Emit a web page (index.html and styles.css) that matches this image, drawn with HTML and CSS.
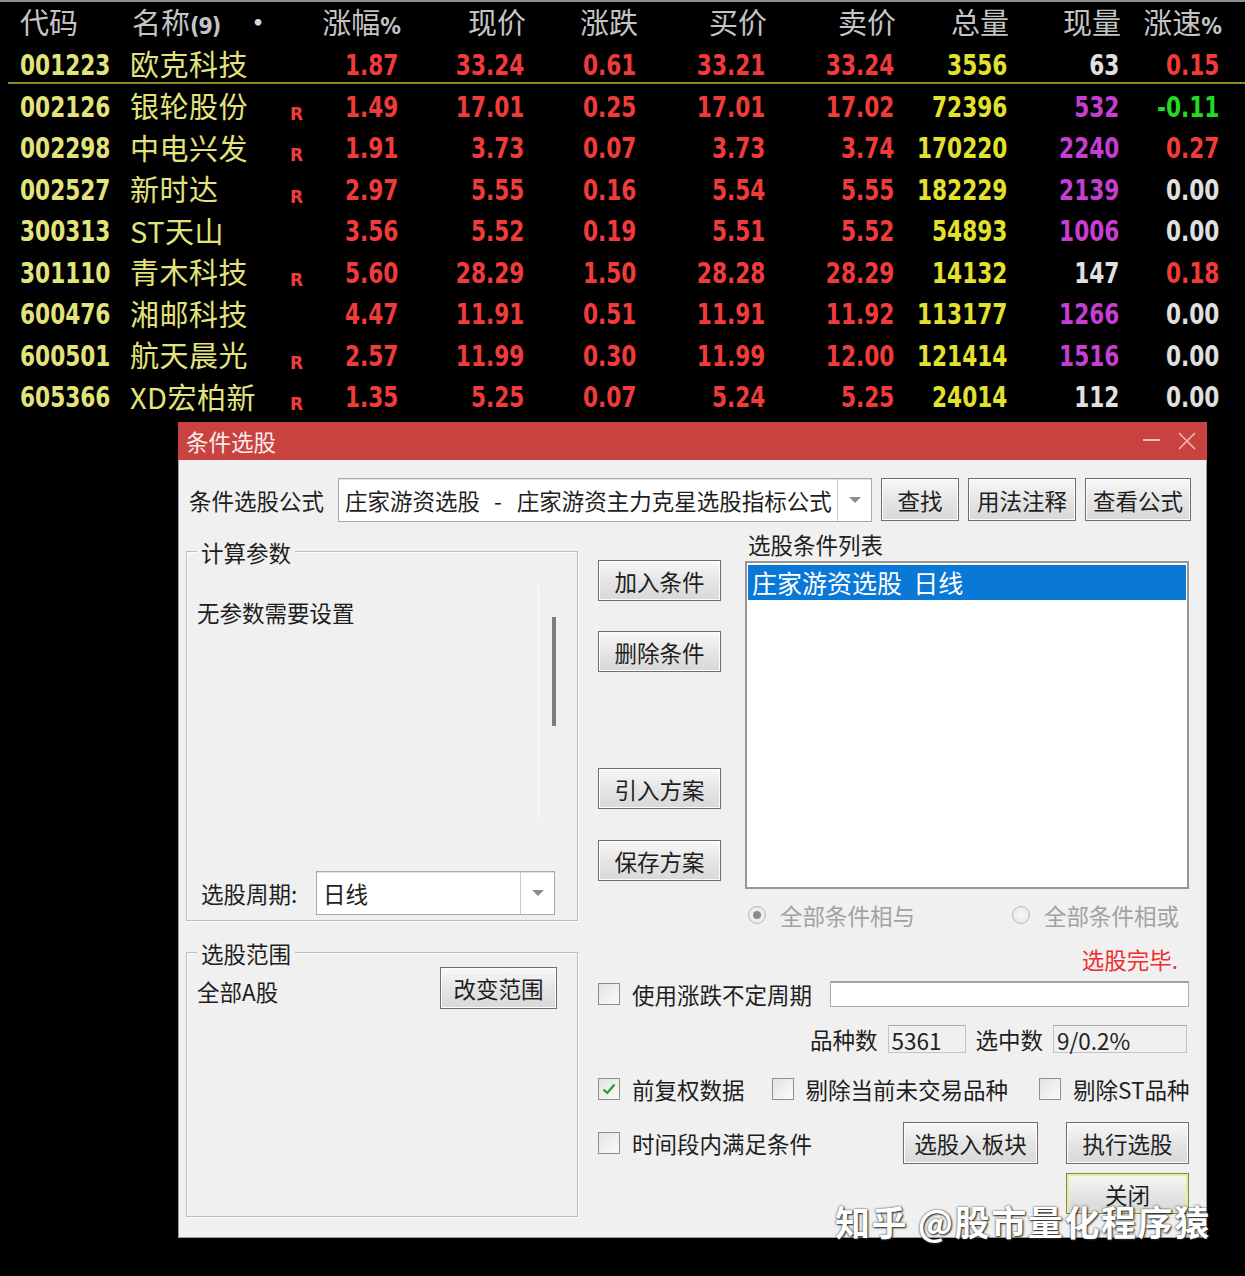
FILE: index.html
```html
<!DOCTYPE html>
<html lang="zh">
<head>
<meta charset="utf-8">
<title>条件选股</title>
<link rel="stylesheet" href="styles.css">
</head>
<body>
<div class="quote">
  <div class="row head">
    <div class="hc">代码</div>
    <div class="hc hname"><span>名称<b class="hb">(9)</b></span><span class="dot">•</span></div>
    <div class="hc"></div>
    <div class="hc num">涨幅<b class="hb">%</b></div>
    <div class="hc num">现价</div>
    <div class="hc num">涨跌</div>
    <div class="hc num">买价</div>
    <div class="hc num">卖价</div>
    <div class="hc num">总量</div>
    <div class="hc num">现量</div>
    <div class="hc num">涨速<b class="hb">%</b></div>
  </div>
  <div class="row first">
    <div class="code">001223</div><div class="name">欧克科技</div><div class="rr"></div>
    <div class="num red">1.87</div><div class="num red">33.24</div><div class="num red">0.61</div><div class="num red">33.21</div><div class="num red">33.24</div><div class="num yel">3556</div><div class="num wht">63</div><div class="num red">0.15</div>
  </div>
  <div class="row">
    <div class="code">002126</div><div class="name">银轮股份</div><div class="rr">R</div>
    <div class="num red">1.49</div><div class="num red">17.01</div><div class="num red">0.25</div><div class="num red">17.01</div><div class="num red">17.02</div><div class="num yel">72396</div><div class="num mag">532</div><div class="num grn">-0.11</div>
  </div>
  <div class="row">
    <div class="code">002298</div><div class="name">中电兴发</div><div class="rr">R</div>
    <div class="num red">1.91</div><div class="num red">3.73</div><div class="num red">0.07</div><div class="num red">3.73</div><div class="num red">3.74</div><div class="num yel">170220</div><div class="num mag">2240</div><div class="num red">0.27</div>
  </div>
  <div class="row">
    <div class="code">002527</div><div class="name">新时达</div><div class="rr">R</div>
    <div class="num red">2.97</div><div class="num red">5.55</div><div class="num red">0.16</div><div class="num red">5.54</div><div class="num red">5.55</div><div class="num yel">182229</div><div class="num mag">2139</div><div class="num wht">0.00</div>
  </div>
  <div class="row">
    <div class="code">300313</div><div class="name">ST天山</div><div class="rr"></div>
    <div class="num red">3.56</div><div class="num red">5.52</div><div class="num red">0.19</div><div class="num red">5.51</div><div class="num red">5.52</div><div class="num yel">54893</div><div class="num mag">1006</div><div class="num wht">0.00</div>
  </div>
  <div class="row">
    <div class="code">301110</div><div class="name">青木科技</div><div class="rr">R</div>
    <div class="num red">5.60</div><div class="num red">28.29</div><div class="num red">1.50</div><div class="num red">28.28</div><div class="num red">28.29</div><div class="num yel">14132</div><div class="num wht">147</div><div class="num red">0.18</div>
  </div>
  <div class="row">
    <div class="code">600476</div><div class="name">湘邮科技</div><div class="rr"></div>
    <div class="num red">4.47</div><div class="num red">11.91</div><div class="num red">0.51</div><div class="num red">11.91</div><div class="num red">11.92</div><div class="num yel">113177</div><div class="num mag">1266</div><div class="num wht">0.00</div>
  </div>
  <div class="row">
    <div class="code">600501</div><div class="name">航天晨光</div><div class="rr">R</div>
    <div class="num red">2.57</div><div class="num red">11.99</div><div class="num red">0.30</div><div class="num red">11.99</div><div class="num red">12.00</div><div class="num yel">121414</div><div class="num mag">1516</div><div class="num wht">0.00</div>
  </div>
  <div class="row">
    <div class="code">605366</div><div class="name">XD宏柏新</div><div class="rr">R</div>
    <div class="num red">1.35</div><div class="num red">5.25</div><div class="num red">0.07</div><div class="num red">5.24</div><div class="num red">5.25</div><div class="num yel">24014</div><div class="num wht">112</div><div class="num wht">0.00</div>
  </div>
</div>

<div class="dlg">
  <div class="title">
    <span>条件选股</span>
    <span class="tmin"></span>
    <svg class="tclose" width="18" height="18" viewBox="0 0 18 18"><path d="M1 1 L17 17 M17 1 L1 17" stroke="#f2b9b8" stroke-width="1.6" fill="none"/></svg>
  </div>
  <div class="body">
    <div class="frow">
      <div class="flabel">条件选股公式</div>
      <div class="combo fcombo"><span class="ctext">庄家游资选股<span class="dash">-</span>庄家游资主力克星选股指标公式</span><span class="carrow"><i></i></span></div>
      <div class="btn b-find">查找</div>
      <div class="btn b-note">用法注释</div>
      <div class="btn b-view">查看公式</div>
    </div>
    <div class="main">
      <div class="leftcol">
        <div class="gb gb1">
          <div class="legend">计算参数</div>
          <div class="gb1body">
            <div class="noparam">无参数需要设置</div>
            <div class="sb"><div class="thumb"></div></div>
          </div>
          <div class="period">
            <div class="plabel">选股周期:</div>
            <div class="combo pcombo"><span class="ctext">日线</span><span class="carrow"><i></i></span></div>
          </div>
        </div>
        <div class="gb gb2">
          <div class="legend">选股范围</div>
          <div class="range">
            <div class="rtext">全部A股</div>
            <div class="btn b-range">改变范围</div>
          </div>
        </div>
      </div>
      <div class="rightarea">
        <div class="upper">
          <div class="midcol">
            <div class="btn mb mb1">加入条件</div>
            <div class="btn mb mb2">删除条件</div>
            <div class="btn mb mb3">引入方案</div>
            <div class="btn mb mb4">保存方案</div>
          </div>
          <div class="listcol">
            <div class="llabel">选股条件列表</div>
            <div class="listbox"><div class="sel">庄家游资选股&nbsp;&nbsp;日线</div></div>
          </div>
        </div>
        <div class="radios">
          <span class="radio on"></span><span class="rlab">全部条件相与</span>
          <span class="radio r2"></span><span class="rlab">全部条件相或</span>
        </div>
        <div class="status">选股完毕.</div>
        <div class="crow cr1">
          <span class="cb"></span><span class="clab">使用涨跌不定周期</span>
          <div class="tinput"></div>
        </div>
        <div class="counts">
          <span class="cnlab">品种数</span><span class="cbox cb-a">5361</span>
          <span class="cnlab cn2">选中数</span><span class="cbox cb-b">9/0.2%</span>
        </div>
        <div class="crow cr2">
          <span class="cb checked"><svg width="16" height="16" viewBox="0 0 16 16"><path d="M2.5 8.5 L6.2 12 L13.5 3.5" stroke="#2e9a32" stroke-width="2.2" fill="none"/></svg></span><span class="clab">前复权数据</span>
          <span class="cb cbx2"></span><span class="clab">剔除当前未交易品种</span>
          <span class="cb cbx3"></span><span class="clab">剔除ST品种</span>
        </div>
        <div class="crow cr3">
          <span class="cb"></span><span class="clab">时间段内满足条件</span>
          <div class="btn b-block">选股入板块</div>
          <div class="btn b-run">执行选股</div>
        </div>
        <div class="closerow">
          <div class="btn b-close">关闭</div>
        </div>
      </div>
    </div>
  </div>
</div>

<div class="watermark">知乎 @股市量化程序猿</div>
</body>
</html>
```

FILE: styles.css
```css
* { box-sizing: border-box; }
html, body { margin: 0; padding: 0; background: #000; }
body {
  width: 1245px;
  height: 1276px;
  overflow: hidden;
  position: relative;
  font-family: "Noto Sans CJK SC", "Noto Sans", sans-serif;
}

/* ---------- quote table ---------- */
.quote { border-top: 2px solid #8e8e8e; }
.row {
  display: grid;
  grid-template-columns: 110px 150px 30px 90px 126px 112px 129px 129px 113px 112px 100px;
  padding-left: 20px;
  height: 41.5px;
  align-items: center;
  white-space: nowrap;
}
.head { height: 40px; align-items: start; }
.first {
  height: 42px;
  border-bottom: 2px solid #8c8c20;
  margin-left: 8px;
  padding-left: 12px;
}

.hc {
  font-family: "Noto Sans CJK SC", sans-serif;
  font-size: 29px;
  line-height: 38px;
  color: #c4c4c4;
}
.hb {
  font-family: "DejaVu Sans Condensed", "DejaVu Sans", sans-serif;
  font-weight: bold;
  font-size: 23px;
  letter-spacing: -1px;
}
.hname { display: flex; justify-content: space-between; padding-left: 2px; padding-right: 9px; }
.dot { font-size: 26px; font-weight: bold; color: #d6d6d6; }

.code, .num {
  font-family: "DejaVu Sans Condensed", "DejaVu Sans", sans-serif;
  font-weight: bold;
  font-size: 29px;
  line-height: 34px;
  margin-bottom: 7px;
  transform: scaleX(0.83);
}
.code { color: #e3e37c; transform-origin: left center; }
.num { text-align: right; padding-right: 2px; transform-origin: right center; }
.hc.num { transform: none; margin-bottom: 0; padding-right: 0; font-family: "Noto Sans CJK SC", sans-serif; font-weight: normal; font-size: 29px; line-height: 38px; }
.name {
  font-family: "Noto Sans CJK SC", sans-serif;
  font-size: 29px;
  color: #e3e37c;
  letter-spacing: 0.5px;
  margin-bottom: 10px;
}
.rr {
  font-family: "DejaVu Sans", sans-serif;
  font-weight: bold;
  font-size: 17px;
  color: #f03c3c;
  padding-left: 10px;
  padding-top: 7px;
}
.red { color: #f03b3b; }
.yel { color: #e2e22e; }
.mag { color: #c63ed4; }
.wht { color: #e0e0e0; }
.grn { color: #22da22; }

/* ---------- dialog ---------- */
.dlg { margin: 6px 0 0 178px; width: 1029px; }
.title {
  height: 38px;
  background: #c8423f;
  display: flex;
  align-items: center;
  padding-left: 8px;
  padding-right: 11px;
  color: #fbeaea;
  font-size: 22.5px;
}
.tmin { margin-left: auto; width: 17px; height: 2px; background: #f2b9b8; margin-top: -2px; }
.tclose { margin-left: 18px; }

.body {
  height: 778px;
  background: #f0f0f0;
  border: 1px solid #9c9c9c;
  border-top: none;
  padding: 17px 0 0 7px;
  font-size: 22.5px;
  color: #1e1e1e;
  line-height: 28px;
  white-space: nowrap;
}

.btn {
  display: flex;
  align-items: center;
  justify-content: center;
  background: linear-gradient(#f8f8f8, #e4e4e4 55%, #d8d8d8);
  border: 1px solid #6e6e6e;
  box-shadow: inset 0 0 0 1px #fdfdfd;
  color: #1e1e1e;
  font-size: 22.5px;
}

.combo {
  display: flex;
  background: #fff;
  border: 1px solid #a9a9a9;
  box-shadow: inset 0 1px 0 #e2e2e2;
}
.ctext { flex: 1; padding-left: 6px; display: flex; align-items: center; }
.dash { padding: 0 15px 0 14px; }
.carrow {
  width: 34px;
  border-left: 1px solid #c9c9c9;
  display: flex;
  align-items: center;
  justify-content: center;
}
.carrow i {
  width: 0; height: 0;
  border-left: 6px solid transparent;
  border-right: 6px solid transparent;
  border-top: 6px solid #8c8c8c;
}

.frow { display: flex; align-items: center; height: 45px; }
.flabel { width: 152px; padding-left: 3px; }
.fcombo { width: 534px; height: 44px; }
.b-find { width: 78px; height: 43px; margin-left: 9px; }
.b-note { width: 108px; height: 43px; margin-left: 9px; }
.b-view { width: 106px; height: 43px; margin-left: 9px; }

.main { display: flex; margin-top: 10px; }
.leftcol { width: 392px; }

.gb {
  border: 1px solid #bdbdbd;
  box-shadow: inset 1px 1px 0 #fcfcfc, 1px 1px 0 #fcfcfc;
}
.legend {
  display: block;
  width: max-content;
  margin: -14px 0 0 10px;
  padding: 0 4px;
  background: #f0f0f0;
  line-height: 28px;
  height: 28px;
}
.gb1 { margin-top: 19px; height: 370px; }
.gb1body { display: flex; height: 305px; }
.noparam { width: 351px; padding-left: 10px; padding-top: 32px; }
.sb { margin-top: 19px; height: 235px; width: 20px; border-left: 1px solid #fbfbfb; }
.thumb { margin-left: 13px; margin-top: 32px; width: 4px; height: 109px; background: #7c7c7c; }
.period { display: flex; align-items: center; height: 44px; }
.plabel { width: 129px; padding-left: 14px; }
.pcombo { width: 239px; height: 44px; }

.gb2 { margin-top: 31px; height: 265px; }
.range { display: flex; align-items: center; height: 42px; }
.rtext { padding-left: 10px; padding-top: 6px; width: 253px; }
.b-range { width: 117px; height: 42px; }

.rightarea { margin-left: 20px; width: 591px; }
.upper { display: flex; height: 357px; }
.midcol { width: 123px; display: flex; flex-direction: column; }
.mb { height: 41px; }
.mb1 { margin-top: 28px; }
.mb2 { margin-top: 30px; }
.mb3 { margin-top: 96px; }
.mb4 { margin-top: 31px; }

.listcol { margin-left: 24px; width: 444px; }
.llabel { height: 24px; line-height: 24px; padding-left: 3px; margin-bottom: 5px; }
.listbox {
  height: 328px;
  background: #fff;
  border: 2px solid #979797;
  padding: 2px 1px;
}
.sel {
  height: 35px;
  background: #0a78d7;
  color: #fff;
  font-size: 25px;
  line-height: 35px;
  padding-left: 4px;
}

.radios { display: flex; align-items: center; height: 28px; margin-top: 12px; color: #a2a2a2; }
.radio {
  width: 18px; height: 18px;
  border-radius: 50%;
  border: 1px solid #b8b8b8;
  background: radial-gradient(circle, #f8f8f8 0, #e4e4e4 100%);
  margin-left: 150px;
  margin-right: 14px;
  display: flex; align-items: center; justify-content: center;
}
.radio.on::after { content: ""; width: 8px; height: 8px; border-radius: 50%; background: #8a8a8a; }
.radio.r2 { margin-left: 97px; }

.status { height: 28px; margin-top: 16px; text-align: right; padding-right: 11px; color: #ee2e2e; }

.crow { display: flex; align-items: center; }
.cb {
  width: 22px; height: 22px;
  border: 1px solid #8e8e8e;
  background: linear-gradient(135deg, #e2e2e2, #fbfbfb);
  display: flex; align-items: center; justify-content: center;
  flex: none;
}
.clab { margin-left: 12px; }
.cr1 { height: 26px; margin-top: 8px; }
.tinput { margin-left: 18px; width: 359px; height: 26px; background: #fff; border: 1px solid #acacac; border-top: 2px solid #a2a2a2; }

.counts { display: flex; align-items: center; height: 28px; margin-top: 18px; padding-left: 212px; }
.cbox {
  height: 28px;
  border: 1px solid #c4c4c4;
  border-top-color: #a8a8a8;
  padding-left: 3px;
  margin-left: 10px;
  color: #222;
}
.cb-a { width: 78px; }
.cn2 { margin-left: 10px; }
.cb-b { width: 134px; }

.cr2 { height: 26px; margin-top: 23px; }
.cbx2 { margin-left: 27px; }
.cbx3 { margin-left: 31px; }

.cr3 { height: 42px; margin-top: 20px; }
.b-block { width: 135px; height: 42px; margin-left: 91px; }
.b-run { width: 123px; height: 42px; margin-left: 28px; }

.closerow { display: flex; justify-content: flex-end; margin-top: 9px; }
.b-close {
  width: 123px; height: 41px;
  border: 1px solid #85855a;
  box-shadow: inset 0 0 0 2px #ecec96;
}

.watermark {
  position: absolute;
  left: 835px;
  top: 1198px;
  font-size: 35px;
  line-height: 46px;
  font-weight: 700;
  letter-spacing: 1.6px;
  color: #fff;
  white-space: nowrap;
  text-shadow: 0 0 2px #333, 1px 1px 2px #222;
}
```
